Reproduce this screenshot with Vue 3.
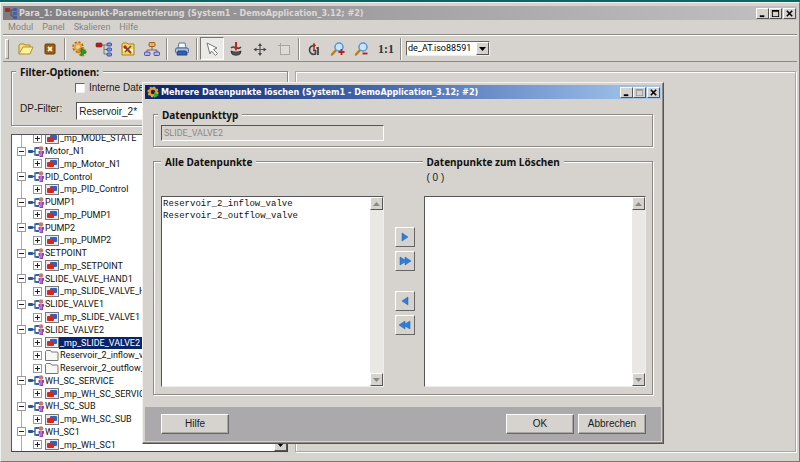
<script setup>
import { ref } from 'vue'

const filter = ref('Reservoir_2*')
const internal = ref(false)
const pointType = ref('SLIDE_VALVE2')
const available = ['Reservoir_2_inflow_valve', 'Reservoir_2_outflow_valve']
const language = ref('de_AT.iso88591')

const tree = [
  { kind: 'master', name: '_mp_MODE_STATE' },
  { kind: 'type', name: 'Motor_N1' },
  { kind: 'master', name: '_mp_Motor_N1' },
  { kind: 'type', name: 'PID_Control' },
  { kind: 'master', name: '_mp_PID_Control' },
  { kind: 'type', name: 'PUMP1' },
  { kind: 'master', name: '_mp_PUMP1' },
  { kind: 'type', name: 'PUMP2' },
  { kind: 'master', name: '_mp_PUMP2' },
  { kind: 'type', name: 'SETPOINT' },
  { kind: 'master', name: '_mp_SETPOINT' },
  { kind: 'type', name: 'SLIDE_VALVE_HAND1' },
  { kind: 'master', name: '_mp_SLIDE_VALVE_HAND1' },
  { kind: 'type', name: 'SLIDE_VALVE1' },
  { kind: 'master', name: '_mp_SLIDE_VALVE1' },
  { kind: 'type', name: 'SLIDE_VALVE2' },
  { kind: 'master', name: '_mp_SLIDE_VALVE2', selected: true },
  { kind: 'point', name: 'Reservoir_2_inflow_valve' },
  { kind: 'point', name: 'Reservoir_2_outflow_valve' },
  { kind: 'type', name: 'WH_SC_SERVICE' },
  { kind: 'master', name: '_mp_WH_SC_SERVICE' },
  { kind: 'type', name: 'WH_SC_SUB' },
  { kind: 'master', name: '_mp_WH_SC_SUB' },
  { kind: 'type', name: 'WH_SC1' },
  { kind: 'master', name: '_mp_WH_SC1' },
]
</script>

<template>
  <div class="desktop">
    <main class="window">
      <header class="titlebar inactive">
        <svg class="app-icon" width="14" height="12" viewBox="0 0 14 12">
          <path d="M4 3h5M6 3v6h3" fill="none" stroke="#555" />
          <rect x="0" y="1" width="5" height="4" rx="1" fill="#a02c2c" />
          <rect x="8" y="1" width="4" height="3" rx="1" fill="#3c5fae" />
          <rect x="8" y="5" width="4" height="3" rx="1" fill="#3c5fae" />
          <rect x="8" y="9" width="4" height="3" rx="1" fill="#3c5fae" />
        </svg>
        <h1>Para_1: Datenpunkt-Parametrierung (System1 - DemoApplication_3.12; #2)</h1>
        <div class="caption-buttons">
          <button aria-label="Minimieren"><svg width="12" height="10" viewBox="0 0 12 10"><path d="M3 7h5v2H3z" /></svg></button>
          <button aria-label="Maximieren"><svg width="12" height="10" viewBox="0 0 12 10"><path d="M2 1h8v8H2zM3 3v5h6V3z" fill-rule="evenodd" /></svg></button>
          <button class="close" aria-label="Schließen"><svg width="12" height="10" viewBox="0 0 12 10"><path d="M3 2l6 6M9 2l-6 6" stroke="#000" stroke-width="1.7" /></svg></button>
        </div>
      </header>

      <nav class="menu">
        <button>Modul</button>
        <button>Panel</button>
        <button>Skalieren</button>
        <button>Hilfe</button>
      </nav>

      <div class="toolbar">
        <span class="grip"></span>
        <button aria-label="Öffnen"><svg width="18" height="16" viewBox="0 0 18 16"><path d="M2 13V4l1-1h4l1 1h5v3" fill="#f7df74" stroke="#a98a28" /><path d="M2 13L6 6h10l-3 7z" fill="#fff0a0" stroke="#b3922b" /></svg></button>
        <button aria-label="Beenden"><svg width="18" height="16" viewBox="0 0 18 16"><rect x="4" y="3" width="10" height="10" rx="1" fill="#9a5f12" stroke="#6b3f08" /><path d="M7 6l4 4M11 6l-4 4" stroke="#fff2cc" stroke-width="1.800" /></svg></button>
        <span class="separator"></span>
        <button aria-label="Module">
          <svg width="18" height="16" viewBox="0 0 18 16"><circle cx="7" cy="6" r="4.500" fill="none" stroke="#b8600c" stroke-width="2.500" stroke-dasharray="2 1.500" /><circle cx="7" cy="6" r="3.200" fill="none" stroke="#f2a428" stroke-width="2.200" /><circle cx="11" cy="11" r="3.200" fill="none" stroke="#d97f14" stroke-width="2.400" stroke-dasharray="2 .8" /><path d="M10 7l5.500 4-5.500 4z" fill="#18a525" stroke="#0b7516" stroke-width=".6" /></svg>
        </button>
        <button aria-label="Datenpunkttypen">
          <svg width="18" height="16" viewBox="0 0 18 16"><path d="M6 4h6M9 4v9h3M9 8.500h3" fill="none" stroke="#777" /><rect x="1" y="2" width="6" height="4" rx="1" fill="#b51d20" stroke="#7d1012" stroke-width=".6" /><g fill="#7f9ce4" stroke="#2846a0" stroke-width=".9"><rect x="12" y="2" width="4.500" height="3" rx="1" /><rect x="12" y="7" width="4.500" height="3" rx="1" /><rect x="12" y="12" width="4.500" height="3" rx="1" /></g></svg>
        </button>
        <button aria-label="Datenbank">
          <svg width="18" height="16" viewBox="0 0 18 16"><path d="M3 14V3l1-1h4l1 1h6v11z" fill="#f4d45c" stroke="#a6851f" /><path d="M4 6h3v4H4zM11 8h3v4h-3z" fill="#fff8d0" /><path d="M6 6l6 6" stroke="#b32a18" stroke-width="2" /><path d="M12 5l-6 6" stroke="#555" stroke-width="1.600" /><path d="M5 5l2 2" stroke="#b32a18" stroke-width="3" /></svg>
        </button>
        <button aria-label="Hierarchie">
          <svg width="18" height="16" viewBox="0 0 18 16"><path d="M9 5v4M4 12V9h10v3" fill="none" stroke="#8a6050" /><rect x="6" y="1.500" width="6" height="4" rx="1" fill="#e9b25c" stroke="#9c5e1e" /><rect x="1.500" y="11" width="5.500" height="3.500" rx="1" fill="#aeb4f4" stroke="#4a4fae" /><rect x="11" y="11" width="5.500" height="3.500" rx="1" fill="#aeb4f4" stroke="#4a4fae" /></svg>
        </button>
        <span class="separator"></span>
        <button aria-label="Drucken">
          <svg width="18" height="16" viewBox="0 0 18 16"><path d="M5 7l1-5h6l1 5z" fill="#f6f8ff" stroke="#5575a8" /><rect x="2.500" y="7" width="13" height="5" rx="1.500" fill="#a9bfe2" stroke="#4a6390" /><path d="M5 10h8l1 4H4z" fill="#2d63b8" stroke="#2c4270" /></svg>
        </button>
        <span class="separator"></span>
        <button class="pressed" aria-label="Auswählen"><svg width="18" height="16" viewBox="0 0 18 16"><path d="M4 2l10 5-3.500 1.500 4 4-2 2-4-4.500L7 13z" fill="#fff" stroke="#777" /></svg></button>
        <button aria-label="Drehen"><svg width="18" height="16" viewBox="0 0 18 16"><path d="M4 10c2 1.500 8 1.500 10 0l-1 3c-2 1.500-6 1.500-8 0z" fill="#555" stroke="#333" /><path d="M4 7c2-2 4-1 6 0s3 0 4-1" fill="none" stroke="#444" stroke-width="1.600" /><path d="M9 1v6" stroke="#c22818" stroke-width="2" /><path d="M6.500 6h5L9 10z" fill="#c22818" /></svg></button>
        <button aria-label="Verschieben"><svg width="18" height="16" viewBox="0 0 18 16"><path d="M9 4v9M4 8.500h10" stroke="#555" stroke-width="1.200" /><path d="M9 2L7 5h4zM9 15l-2-3h4zM2.500 8.500l3-2v4zM15.500 8.500l-3-2v4z" fill="#444" /></svg></button>
        <button aria-label="Rahmen"><svg width="18" height="16" viewBox="0 0 18 16"><rect x="5.500" y="4.500" width="9" height="9" fill="#dedad4" stroke="#aaa69f" /><path d="M5.500 2v5M3 4.500h5" stroke="#aaa69f" /></svg></button>
        <span class="separator"></span>
        <button aria-label="Originalansicht"><svg width="18" height="16" viewBox="0 0 18 16"><path d="M10 5.500C7 3.500 4.500 6 4.500 9s2.500 5 6 4V9.500H8" fill="none" stroke="#444" stroke-width="1.700" /><path d="M13 6v8M11.500 7H13" stroke="#444" stroke-width="1.800" /><path d="M9 3v6" stroke="#c22818" stroke-width="1.500" /><path d="M7 5l2-3.500L11 5z" fill="#c22818" /></svg></button>
        <button aria-label="Vergrößern"><svg width="18" height="16" viewBox="0 0 18 16"><path d="M7 9l-4 4.500" stroke="#c07a1c" stroke-width="2.500" stroke-linecap="round" /><circle cx="10" cy="6" r="4" fill="#c8e4ff" stroke="#5a96d0" stroke-width="1.500" /><path d="M12.500 8v6M9.500 11h6" stroke="#c81818" stroke-width="1.800" /></svg></button>
        <button aria-label="Verkleinern"><svg width="18" height="16" viewBox="0 0 18 16"><path d="M7 9l-4 4.500" stroke="#c07a1c" stroke-width="2.500" stroke-linecap="round" /><circle cx="10" cy="6" r="4" fill="#c8e4ff" stroke="#5a96d0" stroke-width="1.500" /><path d="M9.500 12.500h5" stroke="#c81818" stroke-width="1.800" /></svg></button>
        <button class="scale">1:1</button>
        <span class="separator"></span>
        <div class="combo">
          <select v-model="language" aria-label="Sprache">
            <option>de_AT.iso88591</option>
            <option>en_US.iso88591</option>
          </select>
          <span class="combo-arrow"><svg width="7" height="4" viewBox="0 0 7 4"><path d="M0 0h7L3.500 4z" /></svg></span>
        </div>
      </div>

      <div class="workspace">
        <div class="sidebar">
          <section class="group filter-group">
            <h2 class="legend">Filter-Optionen:</h2>
            <label class="check"><input v-model="internal" type="checkbox" />Interne Datenpunkte</label>
            <div class="filter-row">
              <label for="dp-filter">DP-Filter:</label>
              <input id="dp-filter" v-model="filter" type="text" />
            </div>
          </section>

          <div class="tree-box">
            <ul class="tree">
              <li v-for="node in tree" :key="node.name" :class="[node.kind, { selected: node.selected }]">
                <button class="expander" :aria-label="node.name + ' umschalten'">
                  <svg width="9" height="9" viewBox="0 0 9 9"><rect x=".5" y=".5" width="8" height="8" fill="#fff" stroke="#9a9a9a" /><path :d="node.kind === 'type' ? 'M2 4.500h5' : 'M2 4.500h5M4.500 2v5'" stroke="#222" /></svg>
                </button>
                <svg v-if="node.kind === 'type'" class="node-icon" width="16" height="11" viewBox="0 0 16 11">
                  <path d="M3 5.500h4M10 2H7v7h3" fill="none" stroke="#3a5a92" stroke-width="1.300" />
                  <rect x="0" y="4" width="5" height="3" rx="1" fill="#23559a" />
                  <rect x="8" y="1" width="3" height="2" fill="#2f62a8" /><rect x="8" y="8" width="3" height="2" fill="#2f62a8" />
                  <circle cx="13" cy="2.500" r="2.300" fill="#c8766e" /><path d="M10.500 5H16v2.500L15 8v3h-3.500V8l-1-.5z" fill="#9a3fb0" /><path d="M13 5v5" stroke="#e0a0e0" />
                </svg>
                <svg v-else-if="node.kind === 'master'" class="node-icon" width="14" height="11" viewBox="0 0 14 11">
                  <rect x=".5" y=".5" width="13" height="10" fill="#e8e8ee" stroke="#777" /><rect x="5" y="2" width="7" height="5" rx="1" fill="#2b63c0" /><rect x="2" y="4" width="7" height="5" rx="1" fill="#d3281c" />
                </svg>
                <svg v-else class="node-icon" width="14" height="11" viewBox="0 0 14 11"><path d="M.5 10.500v-9l1-1h4l1 1.500h6l.5 1v7.500z" fill="#f7f7f4" stroke="#777" /></svg>
                <span class="name">{{ node.name }}</span>
              </li>
            </ul>
            <div class="scrollbar">
              <button aria-label="Baum nach oben"><svg width="7" height="4" viewBox="0 0 7 4"><path d="M0 4h7L3.500 0z" /></svg></button>
              <button aria-label="Baum nach unten"><svg width="7" height="4" viewBox="0 0 7 4"><path d="M0 0h7L3.500 4z" /></svg></button>
            </div>
          </div>
        </div>
        <section class="group detail"></section>
      </div>
    </main>

    <div class="dialog" role="dialog" aria-labelledby="dialog-title">
      <header class="titlebar">
        <svg class="app-icon" width="14" height="12" viewBox="0 0 14 12"><circle cx="6" cy="6" r="3.500" fill="none" stroke="#f09a20" stroke-width="2.400" /><circle cx="6" cy="6" r="4.900" fill="none" stroke="#f0b030" stroke-width="1.300" stroke-dasharray="2 1.800" /><path d="M7 6l5 3-5 3z" fill="#28b030" /></svg>
        <h1 id="dialog-title">Mehrere Datenpunkte löschen (System1 - DemoApplication_3.12; #2)</h1>
        <div class="caption-buttons">
          <button aria-label="Dialog minimieren"><svg width="12" height="10" viewBox="0 0 12 10"><path d="M3 7h5v2H3z" /></svg></button>
          <button disabled aria-label="Dialog maximieren"><svg width="12" height="10" viewBox="0 0 12 10"><path d="M2 1h8v8H2zM3 3v5h6V3z" fill="#999" fill-rule="evenodd" /></svg></button>
          <button class="close" aria-label="Dialog schließen"><svg width="12" height="10" viewBox="0 0 12 10"><path d="M3 2l6 6M9 2l-6 6" stroke="#000" stroke-width="1.7" /></svg></button>
        </div>
      </header>

      <div class="dialog-body">
        <section class="group type-group">
          <h2 class="legend"><label for="point-type">Datenpunkttyp</label></h2>
          <input id="point-type" v-model="pointType" type="text" disabled />
        </section>

        <section class="group transfer">
          <h2 class="legend"><label for="all-points">Alle Datenpunkte</label></h2>
          <h2 class="legend right"><label for="delete-points">Datenpunkte zum Löschen</label></h2>
          <p class="count">( 0 )</p>
          <div class="listbox">
            <select id="all-points" multiple>
              <option v-for="item in available" :key="item">{{ item }}</option>
            </select>
            <div class="scrollbar idle">
              <button disabled aria-label="Nach oben"><svg width="7" height="4" viewBox="0 0 7 4"><path d="M0 4h7L3.500 0z" /></svg></button>
              <button disabled aria-label="Nach unten"><svg width="7" height="4" viewBox="0 0 7 4"><path d="M0 0h7L3.500 4z" /></svg></button>
            </div>
          </div>
          <div class="movers">
            <button aria-label="Hinzufügen"><svg width="12" height="10" viewBox="0 0 12 10"><path d="M3 1l6 4-6 4z" /></svg></button>
            <button aria-label="Alle hinzufügen"><svg width="12" height="10" viewBox="0 0 12 10"><path d="M1 1l5 3V1l6 4-6 4V6L1 9z" /></svg></button>
            <button class="back" aria-label="Entfernen"><svg width="12" height="10" viewBox="0 0 12 10"><path d="M9 1L3 5l6 4z" /></svg></button>
            <button aria-label="Alle entfernen"><svg width="12" height="10" viewBox="0 0 12 10"><path d="M11 1L6 4V1L0 5l6 4V6l5 3z" /></svg></button>
          </div>
          <div class="listbox">
            <select id="delete-points" multiple></select>
            <div class="scrollbar idle">
              <button disabled aria-label="Löschliste nach oben"><svg width="7" height="4" viewBox="0 0 7 4"><path d="M0 4h7L3.500 0z" /></svg></button>
              <button disabled aria-label="Löschliste nach unten"><svg width="7" height="4" viewBox="0 0 7 4"><path d="M0 0h7L3.500 4z" /></svg></button>
            </div>
          </div>
        </section>
      </div>

      <footer class="actions">
        <button>Hilfe</button>
        <span class="spacer"></span>
        <button>OK</button>
        <button>Abbrechen</button>
      </footer>
    </div>
  </div>
</template>

<style>
html, body, #app { height: 100%; }
body { margin: 0; background: #0b6663; }
</style>

<style scoped>
* { box-sizing: border-box; }
h1, h2, p, ul { margin: 0; padding: 0; }
button, input, select { margin: 0; padding: 0; border: 0; border-radius: 0; color: inherit; font: inherit; outline: 0; }
svg { display: block; flex: none; }

.desktop {
  position: relative;
  min-height: 100%;
  height: 100%;
  padding-top: 2px;
  overflow: hidden;
  font: 10px/14px "Liberation Sans", Arial, sans-serif;
  color: #1a1a1a;
}
.window {
  display: flex;
  flex-direction: column;
  height: 100%;
  padding: 3px 2px 0 2px;
  background: #d6d3ce;
  border: 1px solid #eef3f0;
  border-right-color: #777;
  border-bottom-color: #777;
}

.titlebar {
  display: flex;
  align-items: center;
  flex: none;
  height: 14px;
  padding: 0 1px 0 2px;
  background: linear-gradient(90deg, #0b246b, #4d6fb4 50%, #a6caf0);
  color: #fff;
}
.titlebar.inactive {
  background: linear-gradient(90deg, #807d80, #a5a2a5 50%, #c2c0c2);
  color: #dcd9d4;
}
.titlebar h1 {
  flex: 1;
  min-width: 0;
  overflow: hidden;
  font: bold 9px/14px "DejaVu Sans Condensed", "Noto Sans", sans-serif;
  white-space: nowrap;
}
.caption-buttons { display: flex; }
.caption-buttons button {
  width: 13px;
  height: 11px;
  background: #d6d3ce;
  border: 1px solid;
  border-color: #fff #555 #555 #fff;
}
.caption-buttons svg { width: 11px; height: 9px; }
.caption-buttons .close { margin-left: 1px; }

.menu {
  display: flex;
  gap: 9px;
  flex: none;
  height: 15px;
  padding: 0 5px;
  border-bottom: 1px solid #8c8984;
  font: 9px/14px Roboto, "Noto Sans", sans-serif;
  color: #85827e;
}
.menu button { background: none; }

.toolbar {
  display: flex;
  align-items: center;
  flex: none;
  height: 27px;
  padding-left: 2px;
  border-top: 1px solid #fff;
  border-bottom: 1px solid #8c8984;
}
.toolbar button {
  display: grid;
  place-items: center;
  width: 24px;
  height: 23px;
  background: none;
}
.toolbar .pressed {
  background: #eceae6;
  border: 1px solid;
  border-color: #777 #fff #fff #777;
}
.toolbar .scale { font: bold 12px/16px "Liberation Serif", serif; color: #333; }
.grip {
  width: 4px;
  height: 20px;
  margin-right: 5px;
  border: 1px solid;
  border-color: #fff #8c8984 #8c8984 #fff;
}
.separator {
  width: 2px;
  height: 22px;
  margin: 0 2px;
  border-left: 1px solid #8c8984;
  border-right: 1px solid #fff;
}
.combo {
  display: flex;
  width: 84px;
  height: 15px;
  margin-left: 2px;
  background: #fff;
  border: 1px solid;
  border-color: #666 #eee #eee #666;
}
.combo select {
  flex: 1;
  min-width: 0;
  padding-left: 1px;
  appearance: none;
  background: #fff;
  font: 9px/13px Roboto, "Noto Sans", sans-serif;
  color: #000;
}
.combo-arrow {
  display: grid;
  place-items: center;
  width: 13px;
  background: #d6d3ce;
  border: 1px solid;
  border-color: #fff #555 #555 #fff;
  pointer-events: none;
}

.workspace {
  display: flex;
  gap: 7px;
  flex: 1;
  min-height: 0;
  padding: 9px 1px 9px 8px;
}
.sidebar {
  display: flex;
  flex-direction: column;
  gap: 8px;
  flex: 0 0 277px;
}
.group {
  border: 1px solid #8c8984;
  box-shadow: 1px 1px 0 #fff, inset 1px 1px 0 #fff;
}
.detail { flex: 1; border-color: #aaa7a2; }
.legend {
  width: fit-content;
  height: 14px;
  margin-top: -7px;
  padding: 0 4px;
  background: #d6d3ce;
  font: bold 10px/14px "Noto Sans", "Open Sans", sans-serif;
  color: #111;
}
.filter-group { padding: 0 4px 5px; }
.check {
  display: flex;
  align-items: center;
  gap: 4px;
  height: 14px;
  margin: 2px 0 7px 59px;
}
.check input {
  width: 10px;
  height: 10px;
  appearance: none;
  background: #fff;
  border: 1px solid;
  border-color: #666 #eee #eee #666;
}
.filter-row { display: flex; gap: 14px; padding-left: 4px; }
.filter-row input {
  flex: 1;
  min-width: 0;
  height: 18px;
  padding-left: 2px;
  background: #fff;
  border: 1px solid;
  border-color: #555 #eee #eee #555;
}

.tree-box {
  display: flex;
  flex: 1;
  min-height: 0;
  overflow: hidden;
  background: #fff;
  border: 1px solid;
  border-color: #555 #444 #444 #555;
}
.tree {
  display: grid;
  grid-auto-rows: minmax(0, 1fr);
  flex: 1;
  min-width: 0;
  margin-top: -3px;
  list-style: none;
  font: 9px/12px Roboto, "Noto Sans", sans-serif;
  color: #111;
  background: linear-gradient(#aaa, #aaa) 9px 0 / 1px 100% no-repeat;
}
.tree li {
  display: flex;
  align-items: center;
  min-width: 0;
  overflow: hidden;
  padding-left: 21px;
  white-space: nowrap;
}
.tree .type { padding-left: 5px; }
.expander { width: 9px; height: 9px; background: none; }
.node-icon { margin-left: 3px; }
.type .node-icon { margin-left: 2px; }
.name { flex: 1; padding-left: 1px; }
.selected .name { background: #0a246a; color: #fff; }

.scrollbar {
  display: flex;
  flex-direction: column;
  justify-content: space-between;
  flex: none;
  width: 13px;
  background: #eae8e4;
}
.scrollbar button {
  display: grid;
  place-items: center;
  width: 13px;
  height: 13px;
  background: #d6d3ce;
  border: 1px solid;
  border-color: #fff #555 #555 #fff;
}
.scrollbar.idle svg { fill: #8c8984; }

.dialog {
  position: absolute;
  inset: 82px 136px 18px 142px;
  display: flex;
  flex-direction: column;
  padding: 2px;
  background: #d6d3ce;
  border: 1px solid;
  border-color: #f4f2ee #555 #555 #f4f2ee;
  box-shadow: inset -1px -1px 0 #8c8984;
}
.dialog-body {
  display: flex;
  flex-direction: column;
  gap: 14px;
  flex: 1;
  min-height: 0;
  padding: 15px 8px 12px;
}
.type-group { padding: 0 7px 5px; }
.type-group .legend { margin-left: -3px; }
.type-group input {
  display: block;
  width: 46%;
  height: 16px;
  margin-top: 3px;
  padding-left: 2px;
  background: #d6d3ce;
  border: 1px solid;
  border-color: #555 #fff #fff #555;
  font: 9px/14px Roboto, "Noto Sans", sans-serif;
  color: #8c8984;
}
.transfer {
  display: grid;
  grid-template: 7px 27px minmax(0, 1fr) / 1fr 40px 1fr;
  flex: 1;
  min-height: 0;
  padding: 0 6px 7px 7px;
}
.legend.right { grid-column: 3; margin-left: -1px; }
.count { grid-column: 3; padding: 2px 3px; }
.listbox {
  display: flex;
  min-height: 0;
  background: #fff;
  border: 1px solid;
  border-color: #555 #eee #eee #555;
}
.listbox select {
  flex: 1;
  min-width: 0;
  height: 100%;
  padding: 2px 1px;
  overflow: hidden;
  appearance: none;
  background: #fff;
  font: 9px/12px "Liberation Mono", "Courier New", monospace;
  color: #111;
}
.listbox option { min-height: 12px; padding: 0; }
.movers {
  display: flex;
  flex-direction: column;
  align-items: center;
  gap: 4px;
  padding: 31px 0 0 2px;
}
.movers button {
  display: grid;
  place-items: center;
  width: 20px;
  height: 20px;
  border: 1px solid;
  border-color: #fff #666 #666 #fff;
  background: #d6d3ce;
}
.movers svg { fill: #2f7fd6; stroke: #1d5fae; stroke-width: .5; }
.movers .back { margin-top: 16px; }

.actions {
  display: flex;
  align-items: center;
  gap: 4px;
  flex: none;
  height: 34px;
  padding: 0 15px 0 16px;
  background: #aca9ac;
}
.actions button {
  width: 68px;
  height: 20px;
  background: #d6d3ce;
  border: 1px solid;
  border-color: #fff #666 #666 #fff;
  box-shadow: inset -1px -1px 0 #aaa7a2;
}
.spacer { flex: 1; }
</style>
